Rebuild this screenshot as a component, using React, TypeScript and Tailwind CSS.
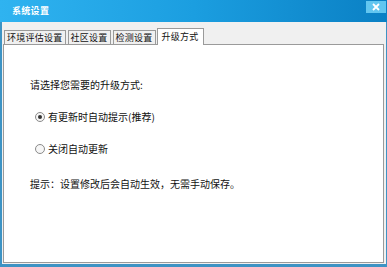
import { useState } from "react"

const tabs = ["环境评估设置", "社区设置", "检测设置", "升级方式"]

const font = { fontFamily: '"Noto Sans CJK SC", "Noto Sans", sans-serif' }

function Radio({ checked }: { checked: boolean }) {
  return (
    <span className="flex h-[10px] w-[10px] items-center justify-center rounded-full border border-[#8a8a8a] bg-[#f6f6f6]">
      {checked && <span className="h-[4px] w-[4px] rounded-full bg-[#333]" />}
    </span>
  )
}

export default function App() {
  const [mode, setMode] = useState(0)

  return (
    <div className="flex h-[267px] w-[387px] flex-col overflow-hidden bg-[#3d93c4] text-[10px] text-[#111]" style={font}>
      {/* title bar */}
      <div className="relative flex h-[22px] shrink-0 items-center bg-gradient-to-r from-[#2fb3f0] via-[#1b9ee0] to-[#0a80c4] pl-[12px]">
        <span className="text-[9px] font-bold tracking-[0.3px] text-white">系统设置</span>
        <button className="absolute right-[1px] top-[1px] flex h-[12px] w-[20px] items-center justify-center bg-[#62c6f0] text-white">
          <svg width="8" height="8" viewBox="0 0 8 8">
            <path d="M1 1 L7 7 M7 1 L1 7" stroke="white" strokeWidth="1.8" />
          </svg>
        </button>
      </div>

      {/* body */}
      <div className="ml-[2px] mr-[1px] mb-[3px] flex flex-1 flex-col bg-[#f0f0f0] pl-[1px] pr-[2px] pb-[1px]">
        <div className="flex h-[22px] items-end gap-[2px] pl-[1px]">
          {tabs.map((t, i) =>
            i === 3 ? (
              <div
                key={t}
                className="relative z-10 -mb-px -ml-px flex h-[17px] items-start border border-b-0 border-[#9a9a9a] bg-white px-[4px] pt-[1px] text-[9px] tracking-[0.25px]"
              >
                {t}
              </div>
            ) : (
              <div
                key={t}
                className="flex h-[14px] items-center border border-b-0 border-[#9a9a9a] bg-[#f0f0f0] px-[2px] text-[9px] tracking-[0.25px]"
              >
                {t}
              </div>
            )
          )}
        </div>
        <div className="flex flex-1 flex-col border border-[#9a9a9a] bg-white pl-[26px] pt-[33px]">
          <div className="leading-[14px]">请选择您需要的升级方式:</div>
          <label className="mt-[18px] ml-[5px] flex items-center gap-[3px] leading-[14px]" onClick={() => setMode(0)}>
            <Radio checked={mode === 0} />
            <span>有更新时自动提示(推荐)</span>
          </label>
          <label className="mt-[18px] ml-[5px] flex items-center gap-[3px] leading-[14px]" onClick={() => setMode(1)}>
            <Radio checked={mode === 1} />
            <span>关闭自动更新</span>
          </label>
          <div className="mt-[21px] leading-[14px]">提示：设置修改后会自动生效，无需手动保存。</div>
        </div>
      </div>
    </div>
  )
}
